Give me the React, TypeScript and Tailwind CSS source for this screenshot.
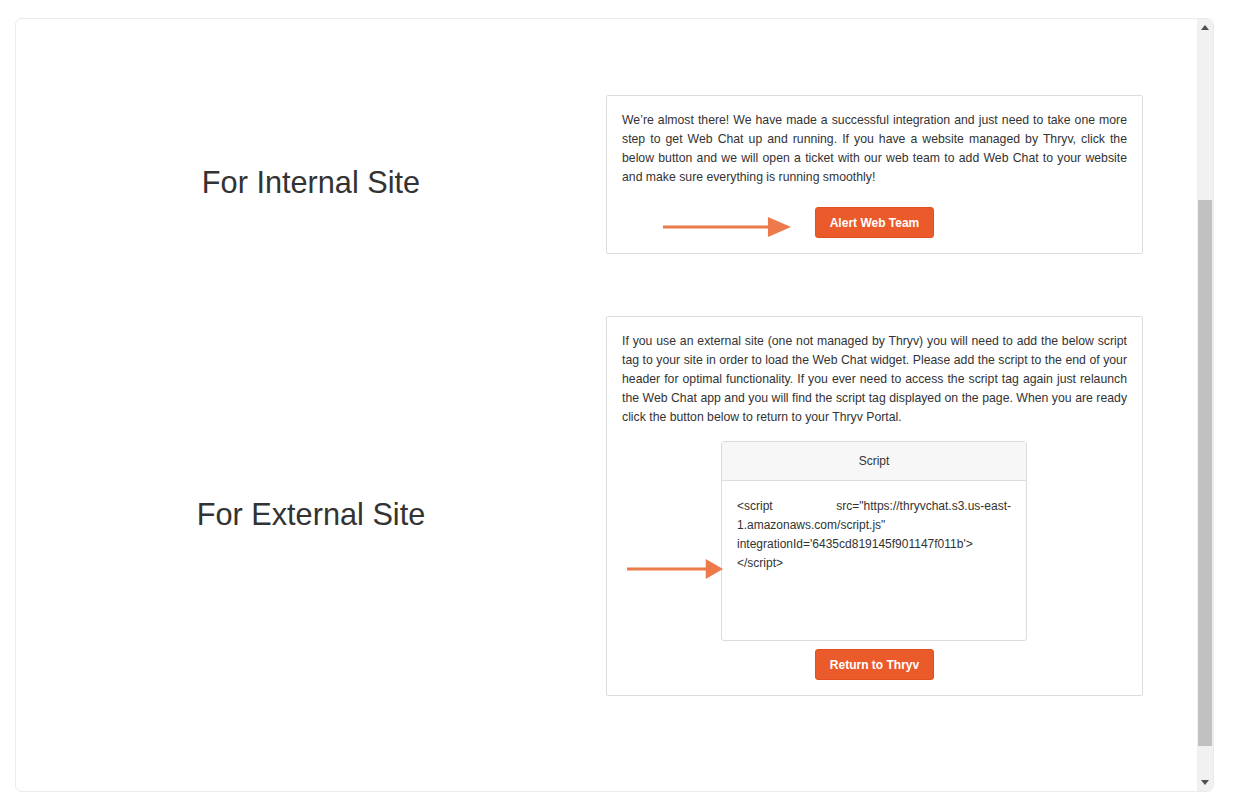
const font = { fontFamily: '"Liberation Sans", Arial, sans-serif' };

function Arrow({ className }: { className: string }) {
  return (
    <svg className={className} viewBox="0 0 100 20" preserveAspectRatio="none" aria-hidden="true">
      <rect x="0" y="8.5" width="84" height="3" fill="#ec7a4b" />
      <polygon points="82,0 100,10 82,20" fill="#ec7a4b" />
    </svg>
  );
}

function OrangeButton({ children }: { children: string }) {
  return (
    <button className="h-[31px] px-[14px] rounded-[3px] bg-[#ea5a2a] border border-[#e2501f] text-white text-[12px] font-semibold">
      {children}
    </button>
  );
}

export default function App() {
  return (
    <div className="min-h-screen bg-white pt-[18px] pl-[15px]" style={font}>
      <div className="w-[1199px] h-[774px] border border-[#ebebee] rounded-[7px] flex overflow-hidden">
        {/* main area */}
        <div className="flex-1 pt-[76px] flex flex-col gap-[62px]">
          {/* internal */}
          <div className="flex">
            <div className="w-[590px] flex items-center justify-center pt-[18px]">
              <h2 className="text-[30.7px] text-[#333]">For Internal Site</h2>
            </div>
            <div className="relative w-[537px] border border-[#dcdcdc] rounded-[2px] px-[15px] pt-[15px] pb-[15px]">
              <p className="text-[12.25px] leading-[19px] text-[#333] text-justify">
                We’re almost there! We have made a successful integration and just need to take one more step to get Web
                Chat up and running. If you have a website managed by Thryv, click the below button and we will open a
                ticket with our web team to add Web Chat to your website and make sure everything is running smoothly!
              </p>
              <div className="flex justify-center mt-[20px]">
                <OrangeButton>Alert Web Team</OrangeButton>
              </div>
              <Arrow className="absolute left-[56px] top-[121px] w-[128px] h-[20px]" />
            </div>
          </div>

          {/* external */}
          <div className="flex">
            <div className="w-[590px] flex items-center justify-center pt-[18px]">
              <h2 className="text-[30.7px] text-[#333]">For External Site</h2>
            </div>
            <div className="relative w-[537px] border border-[#dcdcdc] rounded-[2px] px-[15px] pt-[15px] pb-[15px]">
              <p className="text-[12.25px] leading-[19px] text-[#333] text-justify">
                If you use an external site (one not managed by Thryv) you will need to add the below script tag to your
                site in order to load the Web Chat widget. Please add the script to the end of your header for optimal
                functionality. If you ever need to access the script tag again just relaunch the Web Chat app and you
                will find the script tag displayed on the page. When you are ready click the button below to return to
                your Thryv Portal.
              </p>
              <div className="ml-[99px] mt-[14px] w-[306px] h-[200px] border border-[#dcdcdc] rounded-[3px] flex flex-col">
                <div className="h-[39px] bg-[#f7f7f8] border-b border-[#dcdcdc] flex items-center justify-center text-[12px] text-[#333]">
                  Script
                </div>
                <p className="px-[15px] pt-[16px] text-[12px] leading-[19px] text-[#333] text-justify break-words">
                  {`<script src="https://thryvchat.s3.us-east-1.amazonaws.com/script.js" integrationId='6435cd819145f901147f011b'> </script>`}
                </p>
              </div>
              <div className="flex justify-center mt-[8px]">
                <OrangeButton>Return to Thryv</OrangeButton>
              </div>
              <Arrow className="absolute left-[20px] top-[242px] w-[96px] h-[20px]" />
            </div>
          </div>
        </div>

        {/* scrollbar */}
        <div className="w-[16px] bg-[#f1f1f1] flex flex-col">
          <div className="h-[17px] flex items-center justify-center">
            <svg width="8" height="5" viewBox="0 0 8 5">
              <polygon points="4,0 8,5 0,5" fill="#505050" />
            </svg>
          </div>
          <div className="flex-1 pt-[164px] pb-[28px] px-[1px]">
            <div className="h-full bg-[#c1c1c1]" />
          </div>
          <div className="h-[17px] flex items-center justify-center">
            <svg width="8" height="5" viewBox="0 0 8 5">
              <polygon points="0,0 8,0 4,5" fill="#505050" />
            </svg>
          </div>
        </div>
      </div>
    </div>
  );
}
